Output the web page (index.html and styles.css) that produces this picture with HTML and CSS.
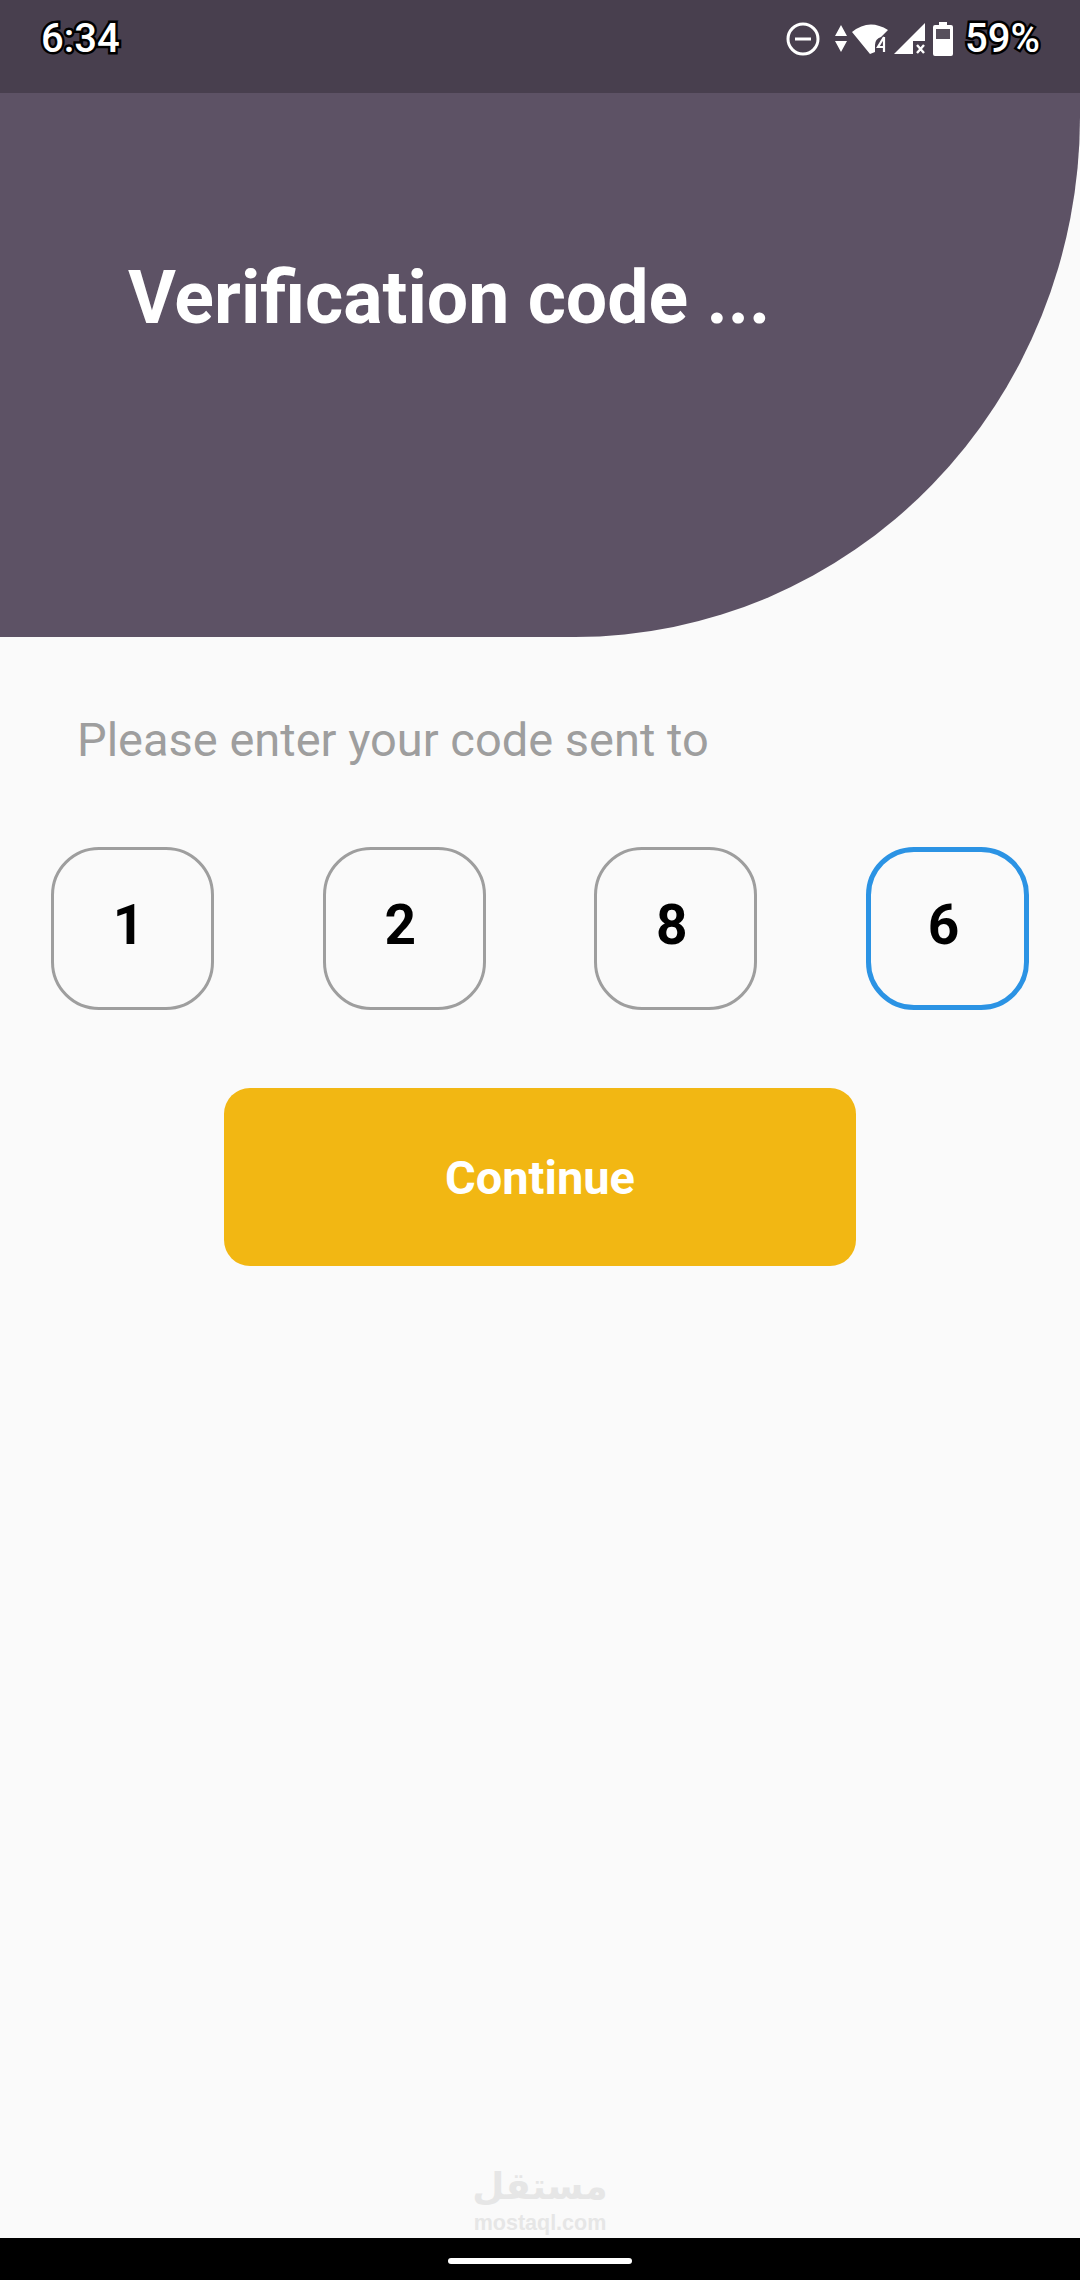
FILE: index.html
```html
<!DOCTYPE html>
<html lang="en">
<head>
    <meta charset="UTF-8">
    <meta name="viewport" content="width=device-width, initial-scale=1.0">
    <title>Verification code</title>
    <link rel="stylesheet" href="styles.css">
</head>
<body>
    <div class="status-bar">
        <span class="status-text">6:34</span>
        <div class="status-icons">
            <svg class="icon-dnd" width="34" height="34" viewBox="0 0 34 34">
                <circle cx="17" cy="17" r="15" fill="none" stroke="#fff" stroke-width="3"/>
                <rect x="9" y="15.5" width="16" height="3" fill="#fff"/>
            </svg>
            <svg class="icon-data" width="12" height="28" viewBox="0 0 12 28">
                <path d="M6 0 L12 11 H0 Z M0 16 H12 L6 27 Z" fill="#fff"/>
            </svg>
            <svg class="icon-wifi" width="38" height="32" viewBox="0 0 38 32">
                <path d="M0 9 Q17 -5 36 7 L29 14 Q23 16 23 22 V29 L18 31 Z" fill="#fff"/>
                <path d="M32 14 L26 24 H33 M32 14 V29 M32 14" fill="none" stroke="#fff" stroke-width="2.2"/>
            </svg>
            <svg class="icon-signal" width="32" height="32" viewBox="0 0 32 32">
                <path d="M0 31 L31 0 V18 H19 V31 Z" fill="#fff"/>
                <path d="M23 22 L30 30 M30 22 L23 30" stroke="#fff" stroke-width="2.4"/>
            </svg>
            <svg class="icon-battery" width="20" height="34" viewBox="0 0 20 34">
                <path d="M6 0 H14 V3 H18 Q20 3 20 5 V32 Q20 34 18 34 H2 Q0 34 0 32 V5 Q0 3 2 3 H6 Z" fill="#fff"/>
                <rect x="3" y="7" width="14" height="10" fill="#57505c"/>
            </svg>
            <span class="status-text battery-pct">59%</span>
        </div>
    </div>

    <header class="hero">
        <h1 class="hero-title">Verification code ...</h1>
    </header>

    <main class="content">
        <p class="hint">Please enter your code sent to</p>
        <div class="code-row">
            <div class="code-box">1</div>
            <div class="code-box">2</div>
            <div class="code-box">8</div>
            <div class="code-box active">6</div>
        </div>
        <button class="continue-btn">Continue</button>
    </main>

    <div class="watermark">
        <span class="wm-arabic" lang="ar" dir="rtl">مستقل</span>
        <span class="wm-latin">mostaql.com</span>
    </div>

    <div class="nav-bar"><div class="nav-pill"></div></div>
</body>
</html>
```

FILE: styles.css
```css
* {
    box-sizing: border-box;
}

body {
    margin: 0;
    width: 1080px;
    height: 2280px;
    display: flex;
    flex-direction: column;
    background-color: #fafafa;
    font-family: Roboto, "Liberation Sans", sans-serif;
    overflow: hidden;
}

.status-bar {
    height: 93px;
    flex: none;
    display: flex;
    justify-content: space-between;
    align-items: center;
    padding: 0 40px 15px 41px;
    background-color: #483f4e;
}

.status-text {
    color: #fff;
    font-size: 40px;
    font-weight: 500;
    line-height: 48px;
    -webkit-text-stroke: 5px #000;
    paint-order: stroke fill;
}

.status-icons {
    display: flex;
    align-items: center;
}

.icon-dnd { margin-right: 15px; }
.icon-data { margin-right: 5px; }
.icon-wifi { margin-right: 4px; }
.icon-signal { margin-right: 7px; }
.icon-battery { margin-right: 12px; }

.hero {
    height: 544px;
    flex: none;
    padding: 162px 0 0 128px;
    background-color: #5d5265;
    border-bottom-right-radius: 505px 520px;
}

.hero-title {
    margin: 0;
    color: #fff;
    font-size: 73.4px;
    font-weight: 700;
    line-height: 86px;
}

.content {
    flex: 1;
    display: flex;
    flex-direction: column;
    padding: 0 51px;
}

.hint {
    margin: 76px 0 0 26px;
    color: #9e9e9e;
    font-size: 47px;
    line-height: 54px;
}

.code-row {
    display: flex;
    justify-content: space-between;
    margin-top: 80px;
}

.code-box {
    width: 163px;
    height: 163px;
    padding: 0 8px 8px 0;
    display: flex;
    align-items: center;
    justify-content: center;
    border: 3px solid #9e9e9e;
    border-radius: 48px;
    color: #000;
    font-size: 55px;
    font-weight: 700;
}

.code-box.active {
    border: 5px solid #2b93e4;
}

.continue-btn {
    align-self: center;
    width: 632px;
    height: 178px;
    margin-top: 78px;
    border: none;
    border-radius: 26px;
    background-color: #f2b713;
    color: #fff;
    font-family: inherit;
    font-size: 47px;
    font-weight: 700;
}

.watermark {
    height: 75px;
    flex: none;
    display: flex;
    flex-direction: column;
    align-items: center;
    color: #e6e6e6;
}

.wm-arabic {
    font-family: "DejaVu Sans", sans-serif;
    font-size: 37px;
    font-weight: 700;
    line-height: 48px;
}

.wm-latin {
    font-family: "Liberation Sans", sans-serif;
    font-size: 21.5px;
    font-weight: 700;
    line-height: 24px;
}

.nav-bar {
    height: 42px;
    flex: none;
    padding-top: 20px;
    background-color: #000;
}

.nav-pill {
    width: 184px;
    height: 6px;
    margin: 0 auto;
    border-radius: 3px;
    background-color: #fff;
}
```
